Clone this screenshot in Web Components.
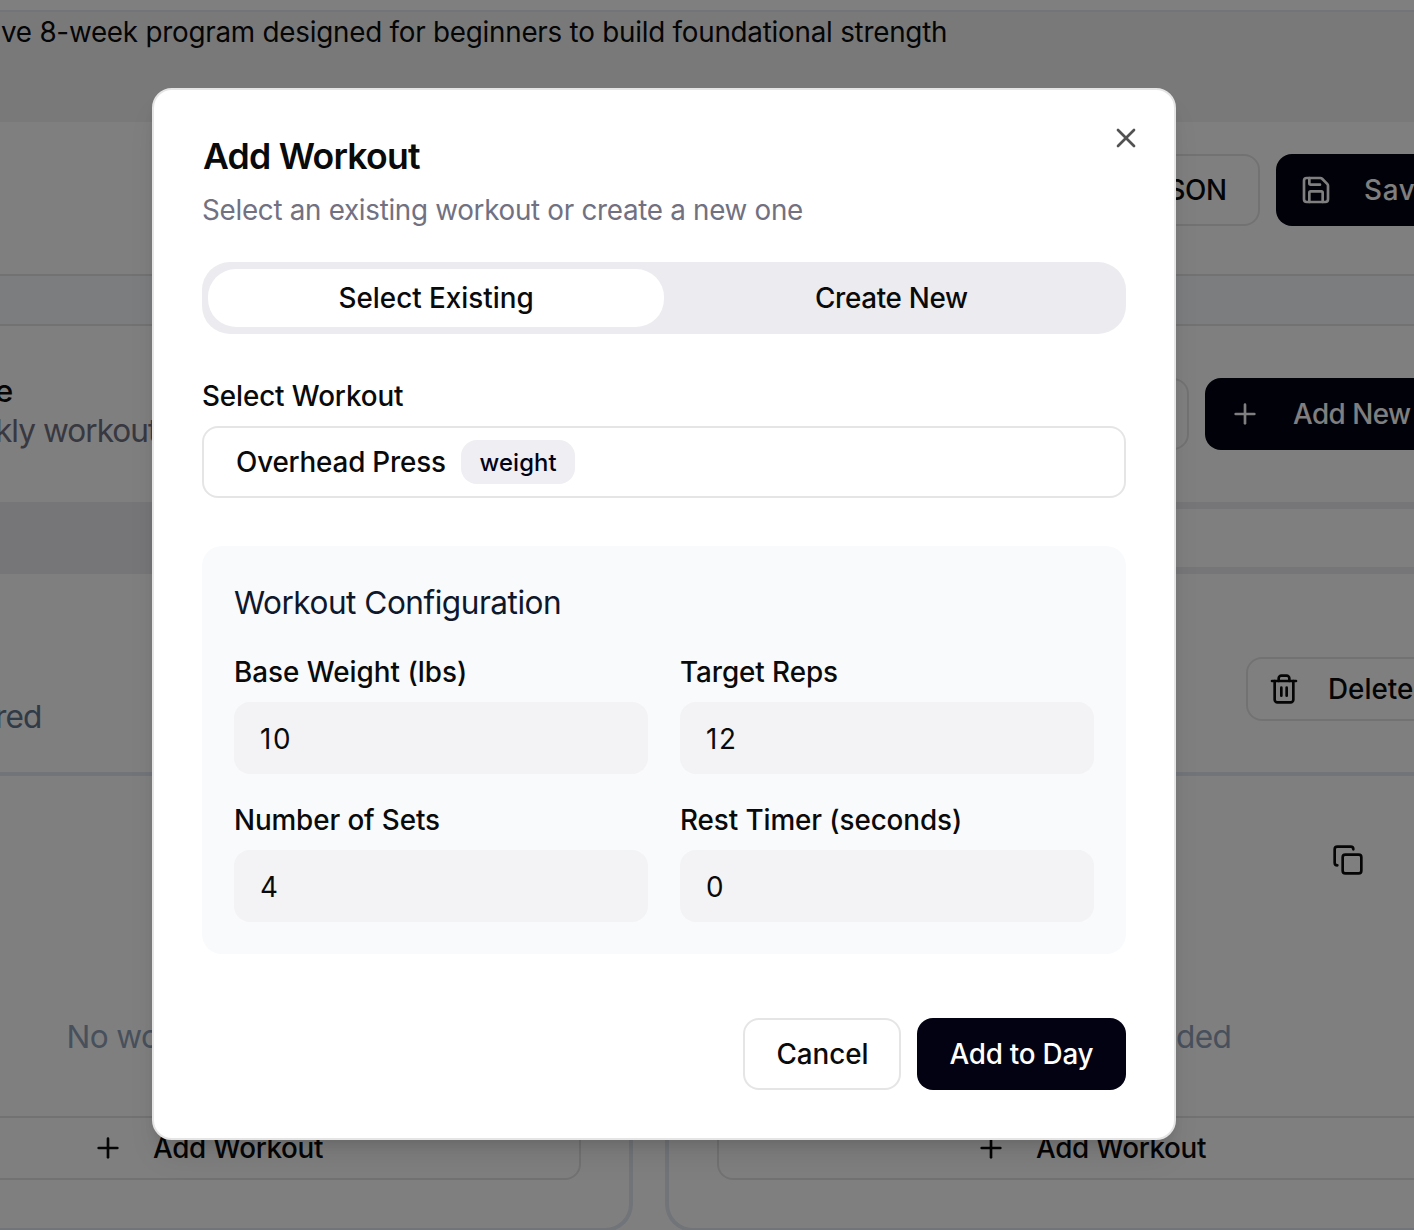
<!DOCTYPE html>
<html lang="en">
<head>
<meta charset="utf-8">
<title>Add Workout</title>
<style>
html,body{margin:0;padding:0}
body{width:1414px;height:1230px;overflow:hidden;background:#fff;font-family:Inter,"Liberation Sans",sans-serif;color:#0a0a0a}
</style>
</head>
<body>
<workout-app></workout-app>
<script>
const define = (name, html, setup) => customElements.define(name, class extends HTMLElement {
  connectedCallback() {
    if (this.shadowRoot) return;
    const t = document.createElement('template');
    t.innerHTML = html;
    this.attachShadow({ mode: 'open' }).appendChild(t.content.cloneNode(true));
    if (setup) setup.call(this, this.shadowRoot);
  }
});

/* Single line of text tracked so its visible glyphs span exactly `w` pixels. */
const pen = document.createElement('canvas').getContext('2d');
define('fit-text', `<style>
  :host{display:inline-block;flex:none;white-space:pre;line-height:1.2;padding-top:2px}
  span{display:inline-block}
</style><span><slot></slot></span>`, function (root) {
  const size = +this.getAttribute('size') || 27.8;
  const weight = this.getAttribute('weight') || 500;
  const w = +this.getAttribute('w');
  const text = this.textContent;
  pen.font = `${weight} ${size}px Inter`;
  const m = pen.measureText(text);
  const ink = m.actualBoundingBoxLeft + m.actualBoundingBoxRight;
  const span = root.querySelector('span');
  this.style.width = w + 'px';
  span.style.font = `${weight} ${size}px/1.2 Inter,"Liberation Sans",sans-serif`;
  span.style.marginLeft = m.actualBoundingBoxLeft + 'px';
  if (text.length > 1) span.style.letterSpacing = ((w - ink) / (text.length - 1)).toFixed(3) + 'px';
});

const icons = {
  x: '<path d="M18 6 6 18"/><path d="m6 6 12 12"/>',
  plus: '<path d="M5 12h14"/><path d="M12 5v14"/>',
  save: '<path d="M15.2 3a2 2 0 0 1 1.4.6l3.8 3.8a2 2 0 0 1 .6 1.4V19a2 2 0 0 1-2 2H5a2 2 0 0 1-2-2V5a2 2 0 0 1 2-2z"/><path d="M17 21v-7a1 1 0 0 0-1-1H8a1 1 0 0 0-1 1v7"/><path d="M7 3v4a1 1 0 0 0 1 1h7"/>',
  trash: '<path d="M3 6h18"/><path d="M19 6v14c0 1-1 2-2 2H7c-1 0-2-1-2-2V6"/><path d="M8 6V4c0-1 1-2 2-2h4c1 0 2 1 2 2v2"/><path d="M10 11v6"/><path d="M14 11v6"/>',
  copy: '<rect width="14" height="14" x="8" y="8" rx="2" ry="2"/><path d="M4 16c-1.1 0-2-.9-2-2V4c0-1.1.9-2 2-2h10c1.1 0 2 .9 2 2"/>'
};
define('line-icon', `<style>
  :host{display:block;flex:none;width:32px;height:32px}
  svg{display:block;width:32px;height:32px;fill:none;stroke:currentColor;stroke-width:2;stroke-linecap:round;stroke-linejoin:round}
</style><svg viewBox="0 0 24 24"></svg>`, function (root) {
  root.querySelector('svg').innerHTML = icons[this.getAttribute('name')];
});

define('ui-button', `<style>
  :host{display:flex;flex:none;box-sizing:border-box;height:72px;align-items:center;justify-content:center;border:2px solid rgba(0,0,0,.1);border-radius:16px;background:#fff;color:#0a0a0a}
  :host([primary]){background:#030213;color:#fff;border:0}
</style><slot></slot>`);

define('tab-list', `<style>
  :host{display:flex;box-sizing:border-box;height:72px;padding:7px 6px;background:#ececf0;border-radius:28px}
</style><slot></slot>`);
define('tab-item', `<style>
  :host{display:flex;flex:1;align-items:center;justify-content:center;border-radius:28px}
  :host([active]){background:#fff}
</style><slot></slot>`);

define('form-field', `<style>
  :host{display:flex;flex-direction:column;flex:1}
  .label{display:flex;height:36px;align-items:center;margin-bottom:12px;padding-left:2px}
  .input{display:flex;box-sizing:border-box;height:72px;align-items:center;background:#f3f3f5;border-radius:16px;padding:2px 0 0 27px}
</style><div class="label"><slot name="label"></slot></div><div class="input"><slot></slot></div>`);

define('day-card', `<style>
  :host{display:flex;flex:none;flex-direction:column;box-sizing:border-box;width:851px;height:420px;border:4px solid #e2e8f0;border-top:0;border-radius:0 0 28px 28px;padding:0 48px 48px;background:#fff}
  .head{display:flex;height:32px;margin-top:32px;justify-content:flex-end;padding-right:100px}
  .empty{display:flex;margin-top:140px;height:40px;align-items:center;justify-content:center;color:#90a1b9}
  ui-button{height:64px;margin-top:60px}
  ui-button line-icon{margin-right:29px}
</style>
<div class="head"><line-icon name="copy"></line-icon></div>
<div class="empty"><fit-text size="31.6" weight="400" w="278">No workouts added</fit-text></div>
<ui-button><line-icon name="plus"></line-icon><fit-text w="170">Add Workout</fit-text></ui-button>`);

define('program-page', `<style>
  :host{display:flex;flex-direction:column;width:1414px;height:1230px;overflow:hidden;background:#fff}
  .row{display:flex;flex:none;box-sizing:border-box;align-items:flex-start;overflow:hidden}
  .desc{height:112px;margin-top:10px;border-top:2px solid #e2e8f0;background:#f3f3f5;padding:2px 0 0 1px}
  .actions{height:152px;padding-top:32px;justify-content:flex-end;gap:16px}
  .actions .json{width:240px;justify-content:flex-end;padding-right:33px}
  .actions .save,.new{justify-content:flex-start;padding-left:24px}
  .save{width:240px;margin-right:-102px}
  .save line-icon{margin-right:33px}
  .band{height:52px;background:#f8fafc;border-top:2px solid #e5e5e5;border-bottom:2px solid #e5e5e5}
  .week{height:176px;justify-content:space-between}
  .titles{display:flex;flex-direction:column;padding-top:45px}
  .titles .sub{color:#717182}
  .btns{display:flex;gap:16px;padding-top:52px;margin-right:-91px}
  .clone{width:200px}
  .new{width:300px}
  .new line-icon{margin-right:32px}
  .tabs{height:72px}
  tab-list{flex:none;width:1800px;margin-left:-200px}
  .day{height:202px;justify-content:space-between;border-bottom:4px solid #e2e8f0}
  .day .status{color:#62748e;padding-top:124px;margin-left:-3px}
  .delete{width:240px;height:64px;justify-content:flex-start;padding-left:20px;margin:83px -72px 0 0}
  .delete line-icon{margin-right:30px}
  .cards{margin:36px 0 0 -218px;width:1740px;gap:32px}
</style>
<div class="row desc"><fit-text weight="400" w="945">ve 8-week program designed for beginners to build foundational strength</fit-text></div>
<div class="row actions">
  <ui-button class="json"><fit-text w="72">JSON</fit-text></ui-button>
  <ui-button primary class="save"><line-icon name="save"></line-icon><fit-text w="66">Save</fit-text></ui-button>
</div>
<div class="row band"></div>
<div class="row week">
  <div class="titles">
    <fit-text size="31.1" weight="500" w="14" style="margin-left:-4px">e</fit-text>
    <fit-text class="sub" size="31.6" weight="400" w="161" style="margin-left:-3px">kly workout</fit-text>
  </div>
  <div class="btns">
    <ui-button class="clone"></ui-button>
    <ui-button primary class="new"><line-icon name="plus"></line-icon><fit-text w="118">Add New</fit-text></ui-button>
  </div>
</div>
<div class="row tabs"><tab-list><tab-item></tab-item><tab-item active></tab-item></tab-list></div>
<div class="row day">
  <fit-text class="status" size="31.6" weight="400" w="43">red</fit-text>
  <ui-button class="delete"><line-icon name="trash"></line-icon><fit-text w="83">Delete</fit-text></ui-button>
</div>
<div class="row cards"><day-card></day-card><day-card></day-card></div>`);

define('workout-dialog', `<style>
  :host{display:flex;flex-direction:column;box-sizing:border-box;width:1024px;height:1052px;padding:48px;background:#fff;border:2px solid #e5e5e5;border-radius:20px;box-shadow:0 20px 30px -6px rgba(0,0,0,.1),0 8px 12px -4px rgba(0,0,0,.1)}
  .head{display:flex;justify-content:space-between;height:124px}
  .titles{display:flex;flex-direction:column;padding-left:1px}
  .titles .title{height:36px;display:flex;align-items:center}
  .titles .sub{height:40px;display:flex;align-items:center;margin-top:16px;color:#717182}
  .head line-icon{opacity:.7;margin:-16px -16px 0 0}
  .label{display:flex;height:36px;align-items:center;margin:44px 0 12px;padding-left:1px}
  .select{display:flex;flex:none;box-sizing:border-box;height:72px;border:2px solid rgba(0,0,0,.1);border-radius:16px;align-items:center;padding-left:33px;gap:16px}
  .badge{display:flex;box-sizing:border-box;width:114px;height:44px;border-radius:16px;background:#eeeef3;color:#030213;align-items:center;justify-content:center}
  .config{display:flex;flex:none;flex-direction:column;box-sizing:border-box;height:408px;margin-top:48px;padding:32px;border-radius:20px;background:#f8fafc}
  .config .name{display:flex;height:48px;align-items:center;color:#0f172b;margin-bottom:28px}
  .fields{display:flex;gap:32px}
  .fields+.fields{margin-top:28px}
  .foot{display:flex;justify-content:flex-end;gap:16px;margin-top:64px}
</style>
<div class="head">
  <div class="titles">
    <div class="title"><fit-text size="35.6" weight="600" w="217">Add Workout</fit-text></div>
    <div class="sub"><fit-text weight="400" w="599">Select an existing workout or create a new one</fit-text></div>
  </div>
  <line-icon name="x"></line-icon>
</div>
<tab-list>
  <tab-item active><fit-text w="193">Select Existing</fit-text></tab-item>
  <tab-item><fit-text w="152">Create New</fit-text></tab-item>
</tab-list>
<div class="label"><fit-text w="200">Select Workout</fit-text></div>
<div class="select"><fit-text w="208">Overhead Press</fit-text><div class="badge"><fit-text size="23.8" w="77">weight</fit-text></div></div>
<div class="config">
  <div class="name"><fit-text size="31.6" weight="400" w="326">Workout Configuration</fit-text></div>
  <div class="fields">
    <form-field><fit-text slot="label" w="229">Base Weight (lbs)</fit-text><fit-text weight="400" w="28">10</fit-text></form-field>
    <form-field><fit-text slot="label" w="156" style="margin-left:-1px">Target Reps</fit-text><fit-text weight="400" w="27">12</fit-text></form-field>
  </div>
  <div class="fields">
    <form-field><fit-text slot="label" w="203">Number of Sets</fit-text><fit-text weight="400" w="16">4</fit-text></form-field>
    <form-field><fit-text slot="label" w="278">Rest Timer (seconds)</fit-text><fit-text weight="400" w="15">0</fit-text></form-field>
  </div>
</div>
<div class="foot">
  <ui-button style="width:158px"><fit-text w="89">Cancel</fit-text></ui-button>
  <ui-button primary style="width:209px"><fit-text w="144">Add to Day</fit-text></ui-button>
</div>`);

define('workout-app', `<style>
  :host{display:block;position:relative;width:1414px;height:1230px;overflow:hidden}
  .overlay{position:absolute;inset:0;background:rgba(0,0,0,.5);padding:88px 0 0 152px;box-sizing:border-box}
</style><program-page></program-page><div class="overlay"><workout-dialog></workout-dialog></div>`);
</script>
</body>
</html>
